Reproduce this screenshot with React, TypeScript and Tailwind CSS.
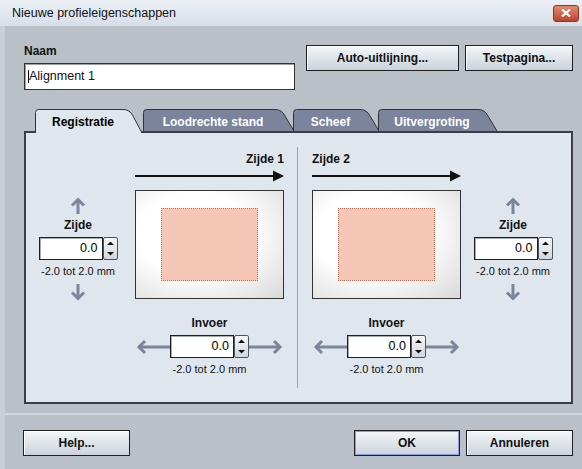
import React from "react"

const ArrowUp = () => (
  <svg width="16" height="18" viewBox="0 0 16 18">
    <path d="M8 17 V2.5" stroke="#7b869a" strokeWidth="3" fill="none" />
    <path d="M2 8.5 L8 2.5 L14 8.5" stroke="#7b869a" strokeWidth="3" fill="none" />
  </svg>
)

const ArrowDown = () => (
  <svg width="16" height="18" viewBox="0 0 16 18">
    <path d="M8 1 V15.5" stroke="#7b869a" strokeWidth="3" fill="none" />
    <path d="M2 9.5 L8 15.5 L14 9.5" stroke="#7b869a" strokeWidth="3" fill="none" />
  </svg>
)

const ArrowSide = ({ dir }: { dir: "left" | "right" }) => (
  <svg width="34" height="16" viewBox="0 0 34 16" className={dir === "right" ? "-scale-x-100" : ""}>
    <path d="M3 8 H34" stroke="#7b869a" strokeWidth="3" fill="none" />
    <path d="M9 2 L3 8 L9 14" stroke="#7b869a" strokeWidth="3" fill="none" />
  </svg>
)

const FeedArrow = () => (
  <svg width="149" height="12" viewBox="0 0 149 12">
    <path d="M0 6 H140" stroke="#111" strokeWidth="2" />
    <path d="M138 0.5 L149 6 L138 11.5 Z" fill="#111" />
  </svg>
)

const Spinner = () => (
  <div className="flex h-[23px]">
    <div className="flex w-[64px] items-center justify-end border border-[#1e1e1e] bg-white pr-[4px] text-[12.5px] font-normal text-black shadow-[inset_1px_1px_0_#a7adb4]">
      0.0
    </div>
    <div className="flex w-[15px] flex-col rounded-[2px] border border-[#4d535a] bg-gradient-to-b from-[#f7f9fb] to-[#cfd6de]">
      <div className="flex flex-1 items-center justify-center">
        <svg width="7" height="5" viewBox="0 0 7 5">
          <path d="M0 4 L3.5 0.5 L7 4 Z" fill="#111" />
        </svg>
      </div>
      <div className="flex flex-1 items-center justify-center">
        <svg width="7" height="5" viewBox="0 0 7 5">
          <path d="M0 1 L3.5 4.5 L7 1 Z" fill="#111" />
        </svg>
      </div>
    </div>
  </div>
)

const SideControl = () => (
  <div className="flex w-[82px] flex-col items-center">
    <ArrowUp />
    <div className="mt-[1px] text-[12px] font-bold">Zijde</div>
    <div className="mt-[3px]">
      <Spinner />
    </div>
    <div className="mt-[3px] text-[11px] font-normal">-2.0 tot 2.0 mm</div>
    <div className="mt-[3px]">
      <ArrowDown />
    </div>
  </div>
)

const FeedControl = () => (
  <div className="flex flex-col items-center">
    <div className="text-[12px] font-bold">Invoer</div>
    <div className="mt-[3px] flex items-center">
      <ArrowSide dir="left" />
      <Spinner />
      <ArrowSide dir="right" />
    </div>
    <div className="mt-[3px] text-[11px] font-normal">-2.0 tot 2.0 mm</div>
  </div>
)

const Paper = () => (
  <div className="flex h-[109px] w-[149px] items-center justify-center border border-[#333] bg-[radial-gradient(ellipse_at_40%_40%,#ffffff_45%,#d9d9d9_100%)]">
    <div className="h-[73px] w-[97px] border border-dotted border-[#c27660] bg-[#f6c6b6]" />
  </div>
)

const Tab = ({ label, w, active }: { label: string; w: number; active?: boolean }) => {
  const h = active ? 24 : 22
  return (
    <div className={`relative flex items-start justify-center pr-[12px] pt-[4px] ${active ? "z-10 -mb-[2px]" : ""}`} style={{ width: w, height: h }}>
      <svg className="absolute inset-0" width={w} height={h} viewBox={`0 0 ${w} ${h}`}>
        <path
          d={`M0.5 ${h} V3.5 Q0.5 0.5 3.5 0.5 H${w - 20} Q${w - 13} 0.5 ${w - 10} 7 L${w - 1} ${h}`}
          fill={active ? "#dfe6ee" : "#7b849c"}
          stroke="#2f3338"
          strokeWidth="1"
        />
      </svg>
      <span className={`relative text-[12px] font-bold ${active ? "text-black" : "text-white"}`}>{label}</span>
    </div>
  )
}

const Button = ({ label, w, primary }: { label: string; w: string; primary?: boolean }) => (
  <div
    className={`flex h-[26px] ${w} items-center justify-center border border-[#1f1f1f] bg-gradient-to-b from-[#f3f6f9] to-[#cbd3dc] text-[12px] font-bold ${
      primary ? "shadow-[inset_0_0_0_1px_#8c9fd9]" : "shadow-[inset_1px_1px_0_#ffffff]"
    }`}
  >
    {label}
  </div>
)

export default function App() {
  return (
    <div className="flex h-[469px] w-[582px] flex-col bg-[#b9c0c7] font-['Liberation_Sans',Arial,sans-serif] text-[#111]">
      {/* title bar */}
      <div className="flex h-[26px] items-center justify-between bg-gradient-to-b from-[#edf1f6] to-[#d6dee7] pl-[12px] pr-[3px]">
        <span className="text-[12.5px]">Nieuwe profieleigenschappen</span>
        <div className="flex h-[17px] w-[26px] items-center justify-center rounded-[3px] border border-[#8b3525] bg-gradient-to-b from-[#e48b72] to-[#b9432e]">
          <svg width="10" height="8" viewBox="0 0 10 8">
            <path d="M1 0.5 L9 7.5 M9 0.5 L1 7.5" stroke="#fff" strokeWidth="2.2" />
          </svg>
        </div>
      </div>

      <div className="flex flex-1">
        <div className="w-[5px] bg-[#c9cfd6]" />
        <div className="flex flex-1 flex-col">
          {/* name + top buttons */}
          <div className="flex items-start pl-[19px] pr-[9px] pt-[18px]">
            <div className="flex flex-col">
              <div className="text-[12px] font-bold leading-[14px]">Naam</div>
              <div className="mt-[5px] flex h-[27px] w-[271px] items-center border border-[#333] bg-white pl-[3px] text-[12.5px] shadow-[inset_1px_1px_0_#9aa0a6]">
                <span className="h-[13px] w-px bg-black" />
                Alignment 1
              </div>
            </div>
            <div className="ml-auto mt-[1px] flex gap-[6px]">
              <Button label="Auto-uitlijning..." w="w-[153px]" />
              <Button label="Testpagina..." w="w-[108px]" />
            </div>
          </div>

          {/* tabs */}
          <div className="mt-[19px] flex items-end pl-[30px]">
            <Tab label="Registratie" w={108} active />
            <Tab label="Loodrechte stand" w={152} />
            <div className="-ml-[2px]">
              <Tab label="Scheef" w={87} />
            </div>
            <div className="-ml-[2px]">
              <Tab label="Uitvergroting" w={120} />
            </div>
          </div>

          {/* panel */}
          <div className="ml-[19px] mr-[9px] flex h-[273px] border-2 border-[#3a3e44] bg-[#dfe6ee]">
            <div className="flex w-[271px]">
              <div className="ml-[11px] pt-[64px]">
                <SideControl />
              </div>
              <div className="ml-[16px] flex w-[149px] flex-col pt-[19px]">
                <div className="text-right text-[12px] font-bold leading-[14px]">Zijde 1</div>
                <div className="mt-[4px]">
                  <FeedArrow />
                </div>
                <div className="mt-[8px]">
                  <Paper />
                </div>
                <div className="mt-[15px]">
                  <FeedControl />
                </div>
              </div>
            </div>
            <div className="my-[14px] w-px bg-[#9aa2ab]" />
            <div className="flex flex-1">
              <div className="ml-[14px] flex w-[149px] flex-col pt-[19px]">
                <div className="text-[12px] font-bold leading-[14px]">Zijde 2</div>
                <div className="mt-[4px]">
                  <FeedArrow />
                </div>
                <div className="mt-[8px]">
                  <Paper />
                </div>
                <div className="mt-[15px]">
                  <FeedControl />
                </div>
              </div>
              <div className="ml-[11px] pt-[64px]">
                <SideControl />
              </div>
            </div>
          </div>

          {/* separator */}
          <div className="mt-[9px] h-[2px] bg-[#d3d9df]" />

          {/* footer */}
          <div className="flex pl-[18px] pr-[9px] pt-[15px]">
            <Button label="Help..." w="w-[107px]" />
            <div className="ml-auto flex gap-[6px]">
              <Button label="OK" w="w-[106px]" primary />
              <Button label="Annuleren" w="w-[107px]" />
            </div>
          </div>
        </div>
      </div>
    </div>
  )
}
